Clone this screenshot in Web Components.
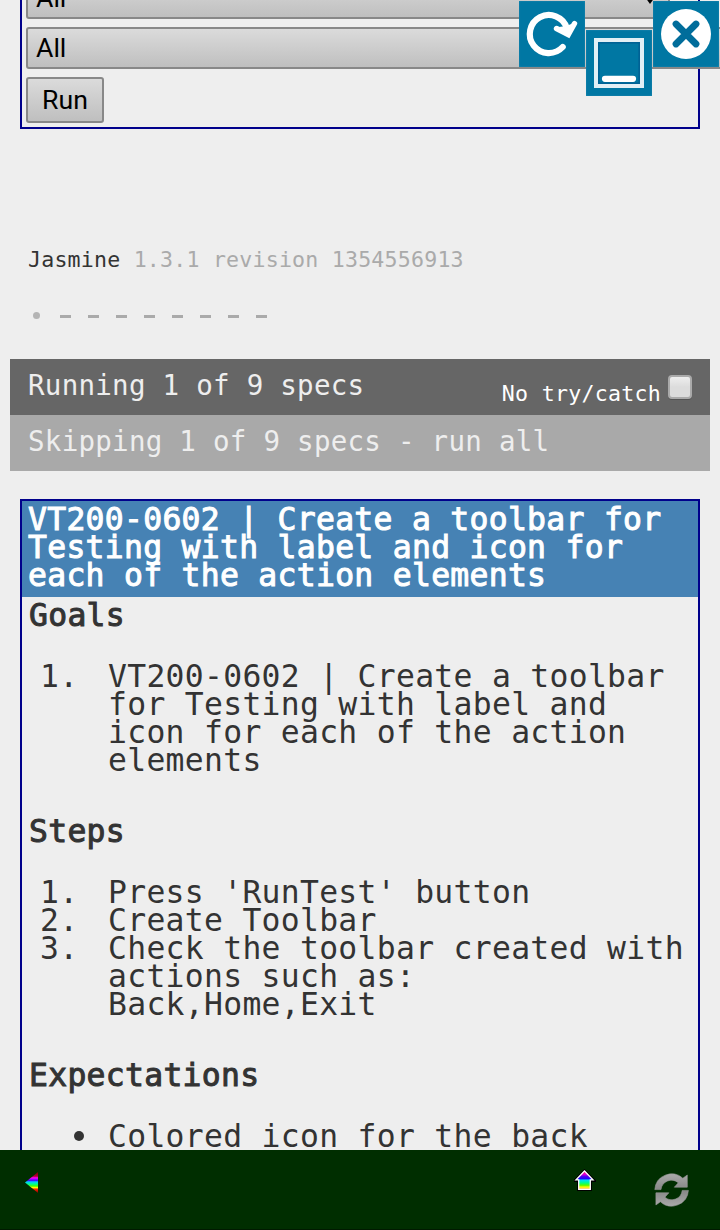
<!DOCTYPE html>
<html lang="en"><head><meta charset="utf-8"><title>Jasmine specs</title>
<style>
html,body{margin:0;width:720px;height:1230px;overflow:hidden;background:#eee}
body{font-family:"DejaVu Sans Mono","Liberation Mono",monospace;color:#333}
</style></head><body>
<spec-page></spec-page>
<script>
const define=(name,html)=>{const t=document.createElement('template');t.innerHTML=html;
customElements.define(name,class extends HTMLElement{constructor(){super();this.attachShadow({mode:'open'}).appendChild(t.content.cloneNode(true));}});};

define('select-box',`<style>:host{display:block;box-sizing:border-box;height:42px;border:2px solid #888;border-radius:3px;background:linear-gradient(#dbdbdb,#bfbfbf);font:26.67px/38px Roboto,sans-serif;color:#000;padding-left:8px;white-space:nowrap}</style><slot></slot>`);
define('run-button',`<style>:host{display:block;box-sizing:border-box;width:78px;height:46px;border:2px solid #888;border-radius:3px;background:linear-gradient(#dbdbdb,#bfbfbf);font:26.67px/43px Roboto,sans-serif;color:#000;text-align:center}</style><slot></slot>`);
define('suite-form',`<style>:host{display:flex;flex-direction:column;justify-content:flex-end;gap:8px;box-sizing:border-box;margin:0 20px;height:129px;border:2px solid #00008b;border-top:0;padding:0 4px 4px}
select-box{flex:none;width:710px}select-box.short{width:644px;display:flex;justify-content:space-between}i{width:0;height:0;border:5px solid transparent;border-top:7px solid #000;margin:18px 13px 0 0}run-button{flex:none}</style>
<select-box class="short">All<i></i></select-box><select-box>All</select-box><run-button>Run</run-button>`);
define('window-tools',`<style>:host{position:absolute;left:519px;top:1px;display:flex;gap:1px}svg{display:block;width:66px;height:66px;background:#0077a3;box-shadow:inset 0 0 2px #2b8fb3}.low{margin-top:29px}</style>
<svg viewBox="0 0 66 66"><path d="M43.7 46A19 19 0 1 1 47.8 27" fill="none" stroke="#fff" stroke-width="6.2" stroke-linecap="round"/><path d="M37.5 27.5L49.3 33.7L55.5 22.5" fill="none" stroke="#fff" stroke-width="5.4" stroke-linecap="round"/><path d="M40 26L50 35L55 22L47 25Z" fill="#fff"/></svg>
<svg class="low" viewBox="0 0 66 66"><rect x="10" y="10" width="46" height="46" fill="none" stroke="#e2eff5" stroke-width="4"/><rect x="12.8" y="12.8" width="40.4" height="40.4" fill="none" stroke="#006295" stroke-width="1.6"/><path d="M19 48.8H47" stroke="#fff" stroke-width="6.2" stroke-linecap="round"/></svg>
<svg viewBox="0 0 66 66"><circle cx="33" cy="33" r="25" fill="#fff"/><path d="M23 23L43 43M43 23L23 43" stroke="#006d9b" stroke-width="6.8" stroke-linecap="round"/></svg>`);
define('jasmine-banner',`<style>:host{display:block;margin:117px 0 0 28px;font-size:21.6px;letter-spacing:.0095em;line-height:28px;white-space:pre}span{color:#aaa}</style>Jasmine <span>1.3.1 revision 1354556913</span>`);
define('spec-symbols',`<style>:host{display:flex;align-items:center;height:14px;margin:34px 0 0 28px;color:#aaa}b{width:7px;height:7px;border-radius:50%;background:#b4b4b4;margin:0 25px 0 5px}i{width:11px;height:3px;background:#aaa;margin:3px 17px 0 0}b+i{margin-left:-5px}</style><b></b>${'<i></i>'.repeat(8)}`);
define('status-bar',`<style>:host{display:flex;justify-content:space-between;box-sizing:border-box;height:56px;margin:0 10px;padding:0 18px;background:var(--bar);color:#eee;font-size:27.5px;letter-spacing:.0095em;line-height:53px;white-space:pre}</style><span><slot></slot></span><slot name="end"></slot>`);
define('try-toggle',`<style>:host{display:flex;color:#fff;font-size:21.6px;line-height:69px}i{box-sizing:border-box;width:24px;height:24px;margin:16px 0 0 7px;border:2px solid #aaa;border-radius:4px;background:linear-gradient(#eee,#dcdcdc 50%);box-shadow:0 1px #555}</style><slot></slot><i></i>`);
define('spec-title',`<style>:host{display:block;box-sizing:border-box;height:96px;padding:4px 6px 0;background:#4682b4;color:#fff;-webkit-text-stroke:1px #fff;white-space:nowrap}</style><slot></slot>`);
define('spec-heading',`<style>:host{display:block;padding-left:7px;-webkit-text-stroke:1px #333}</style><slot></slot>`);
define('spec-item',`<style>:host{display:grid;grid-template-columns:68px 1fr;padding-left:18px;white-space:nowrap}i{display:block;justify-self:end;width:10px;height:10px;border-radius:50%;background:#333;margin:9px 24px 0 0}</style><slot name="n"><i></i></slot><div><slot></slot></div>`);
define('spec-panel',`<style>:host{display:block;box-sizing:border-box;height:651px;margin:28px 20px 0;border:2px solid #00008b;border-bottom:0;font-size:31.4px;letter-spacing:.0095em;line-height:28px;overflow:hidden}
.goals{margin:4px 0 33px}.next{margin:43px 0 33px}</style>
<spec-title>VT200-0602 | Create a toolbar for<br>Testing with label and icon for<br>each of the action elements</spec-title>
<spec-heading class="goals">Goals</spec-heading>
<spec-item><span slot="n">1.</span>VT200-0602 | Create a toolbar<br>for Testing with label and<br>icon for each of the action<br>elements</spec-item>
<spec-heading class="next">Steps</spec-heading>
<spec-item><span slot="n">1.</span>Press 'RunTest' button</spec-item>
<spec-item><span slot="n">2.</span>Create Toolbar</spec-item>
<spec-item><span slot="n">3.</span>Check the toolbar created with<br>actions such as:<br>Back,Home,Exit</spec-item>
<spec-heading class="next">Expectations</spec-heading>
<spec-item>Colored icon for the back</spec-item>`);
define('bottom-toolbar',`<style>:host{display:flex;box-sizing:border-box;height:80px;background:#002e00;border-bottom:1px solid #001a00}svg{display:block;flex:none}.back{margin:21px 0 0 25px}.home{margin:19px 0 0 536px}.sync{margin:21px 0 0 57px}</style>
<svg class="back" width="13" height="23" viewBox="0 0 13 23"><defs><linearGradient id="r" x2="0" y2="1"><stop stop-color="#700"/><stop offset=".2" stop-color="#b00030"/><stop offset=".28" stop-color="#f0f"/><stop offset=".4" stop-color="#40f"/><stop offset=".47" stop-color="#0cf"/><stop offset=".58" stop-color="#0f8"/><stop offset=".67" stop-color="#4f0"/><stop offset=".74" stop-color="#ff0"/><stop offset=".82" stop-color="#f20"/><stop offset="1" stop-color="#700"/></linearGradient></defs><path d="M0 11.5L13 1V22Z" fill="url(#r)"/></svg>
<svg class="home" width="22" height="25" viewBox="0 0 22 25"><defs><linearGradient id="h" x2="0" y2="1"><stop stop-color="#f04"/><stop offset=".17" stop-color="#e0c"/><stop offset=".3" stop-color="#50e"/><stop offset=".42" stop-color="#20f"/><stop offset=".5" stop-color="#0df"/><stop offset=".65" stop-color="#0f8"/><stop offset=".78" stop-color="#5f0"/><stop offset=".88" stop-color="#ff0"/><stop offset="1" stop-color="#fa6"/></linearGradient></defs><path d="M10.5 2L20 11.5H16.5V20.5H4.5V11.5H1Z" fill="#000" stroke="#000" stroke-width="3"/><path d="M10.5 2L19 10.8H16.3V20.3H4.7V10.8H2Z" fill="url(#h)" stroke="#fff" stroke-width="1.3"/></svg>
<svg class="sync" width="38" height="38" viewBox="0 0 38 38"><defs><linearGradient id="g" x2="0" y2="1"><stop stop-color="#aaa"/><stop offset="1" stop-color="#868686"/></linearGradient></defs><g fill="url(#g)" stroke="#999" stroke-width=".6"><path d="M1.8 18.6A16.8 16.8 0 0 1 29.8 7.2L34.3 4V16.2H21.3L25.3 11.8A10.5 10.5 0 0 0 8 18.6Z"/><path d="M1.8 18.6A16.8 16.8 0 0 1 29.8 7.2L34.3 4V16.2H21.3L25.3 11.8A10.5 10.5 0 0 0 8 18.6Z" transform="rotate(180 18.6 19)"/></g></svg>`);
define('spec-page',`<style>:host{display:block;position:relative;width:720px;height:1230px;overflow:hidden}.run{margin-top:37px;--bar:#666}.skip{--bar:#a9a9a9}</style>
<suite-form></suite-form><window-tools></window-tools><jasmine-banner></jasmine-banner><spec-symbols></spec-symbols>
<status-bar class="run">Running 1 of 9 specs<try-toggle slot="end">No try/catch</try-toggle></status-bar><status-bar class="skip">Skipping 1 of 9 specs - run all</status-bar>
<spec-panel></spec-panel><bottom-toolbar></bottom-toolbar>`);
</script></body></html>
